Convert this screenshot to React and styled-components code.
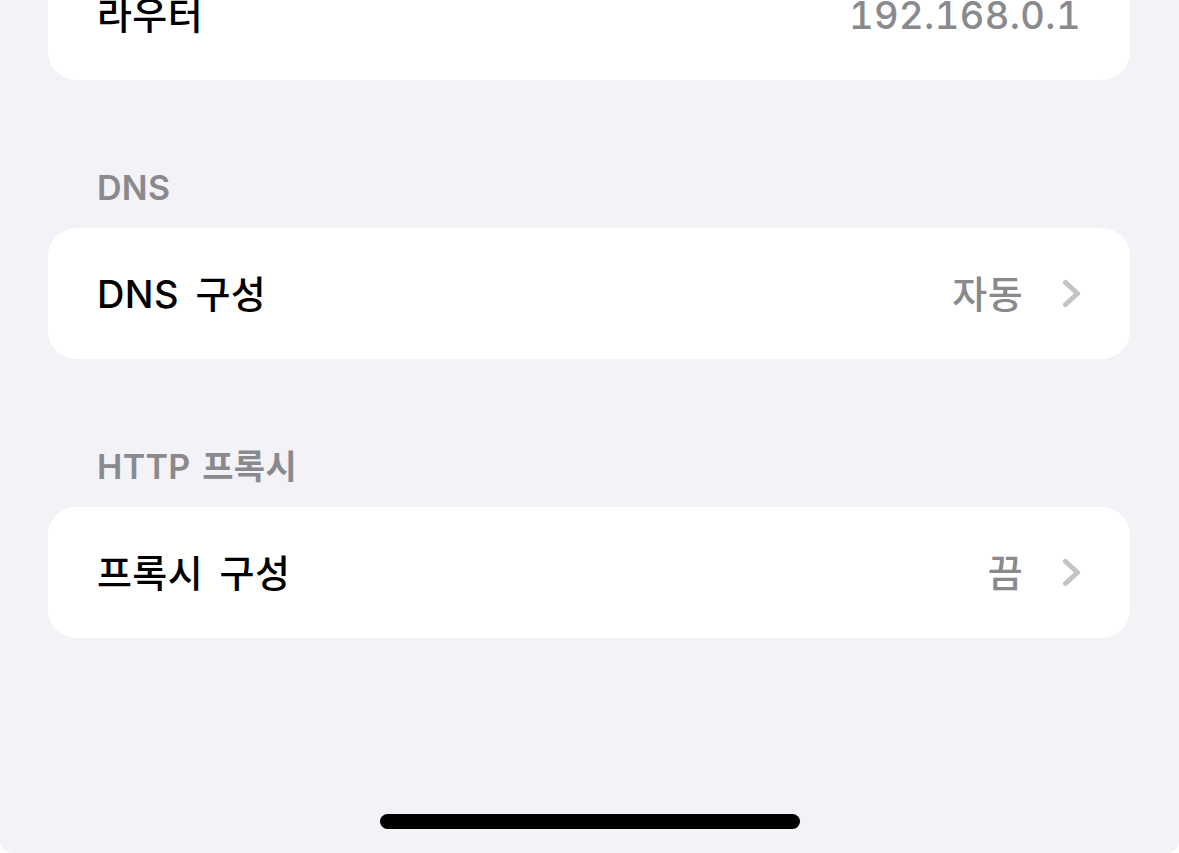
import React from "react";
import styled, { createGlobalStyle } from "styled-components";

const gray = "#8a8a8e";
const fontStack = `"Inter", "Noto Sans CJK KR", sans-serif`;

const Global = createGlobalStyle`
  html, body {
    margin: 0;
    padding: 0;
    background: #ffffff;
  }
  body {
    font-family: ${fontStack};
    -webkit-font-smoothing: antialiased;
  }
`;

const Screen = styled.div`
  width: 1179px;
  height: 853px;
  background: #f2f2f7;
  border-radius: 0 0 12px 12px;
  overflow: hidden;
  display: flex;
  flex-direction: column;
`;

const Content = styled.div`
  flex: 1;
  display: flex;
  flex-direction: column;
  padding: 0 49px 0 48px;
`;

const Card = styled.div`
  background: #ffffff;
  border-radius: 28px;
  margin-top: ${props => (props.first ? "-51px" : "0")};
`;

const SectionHeader = styled.div`
  padding: 88px 0 0 49px;
  margin-bottom: 20px;
  font-size: 34px;
  line-height: 40px;
  font-weight: 600;
  letter-spacing: 0.3px;
  word-spacing: 3px;
  color: ${gray};
`;

const Row = styled.div`
  height: 131px;
  display: flex;
  align-items: center;
  justify-content: space-between;
  padding: 0 49px;
  font-size: 38px;
  line-height: 46px;
`;

const Label = styled.div`
  color: #000000;
  font-weight: 500;
  letter-spacing: 0.4px;
  word-spacing: 6px;
`;

const Trailing = styled.div`
  display: flex;
  align-items: center;
  gap: 39px;
`;

const Value = styled.div`
  color: ${gray};
  font-weight: 500;
  font-variant-numeric: tabular-nums;
  letter-spacing: 0.4px;
`;

const HomeBar = styled.div`
  width: 420px;
  height: 15px;
  border-radius: 8px;
  background: #000000;
  align-self: center;
  margin-bottom: 24px;
`;

const Chevron = () => (
  <svg width="19" height="29" viewBox="0 0 19 29" fill="none">
    <polyline
      points="3.5,3.5 15.5,14.5 3.5,25.5"
      stroke="#c4c4c7"
      strokeWidth="5"
      strokeLinecap="round"
      strokeLinejoin="round"
    />
  </svg>
);

const SettingRow = ({ label, value, link }) => (
  <Row>
    <Label>{label}</Label>
    <Trailing>
      <Value>{value}</Value>
      {link && <Chevron />}
    </Trailing>
  </Row>
);

export default function App() {
  return (
    <>
      <Global />
      <Screen>
        <Content>
          <Card first>
            <SettingRow label="라우터" value="192.168.0.1" />
          </Card>

          <SectionHeader>DNS</SectionHeader>
          <Card>
            <SettingRow label="DNS 구성" value="자동" link />
          </Card>

          <SectionHeader>HTTP 프록시</SectionHeader>
          <Card>
            <SettingRow label="프록시 구성" value="끔" link />
          </Card>
        </Content>
        <HomeBar />
      </Screen>
    </>
  );
}
